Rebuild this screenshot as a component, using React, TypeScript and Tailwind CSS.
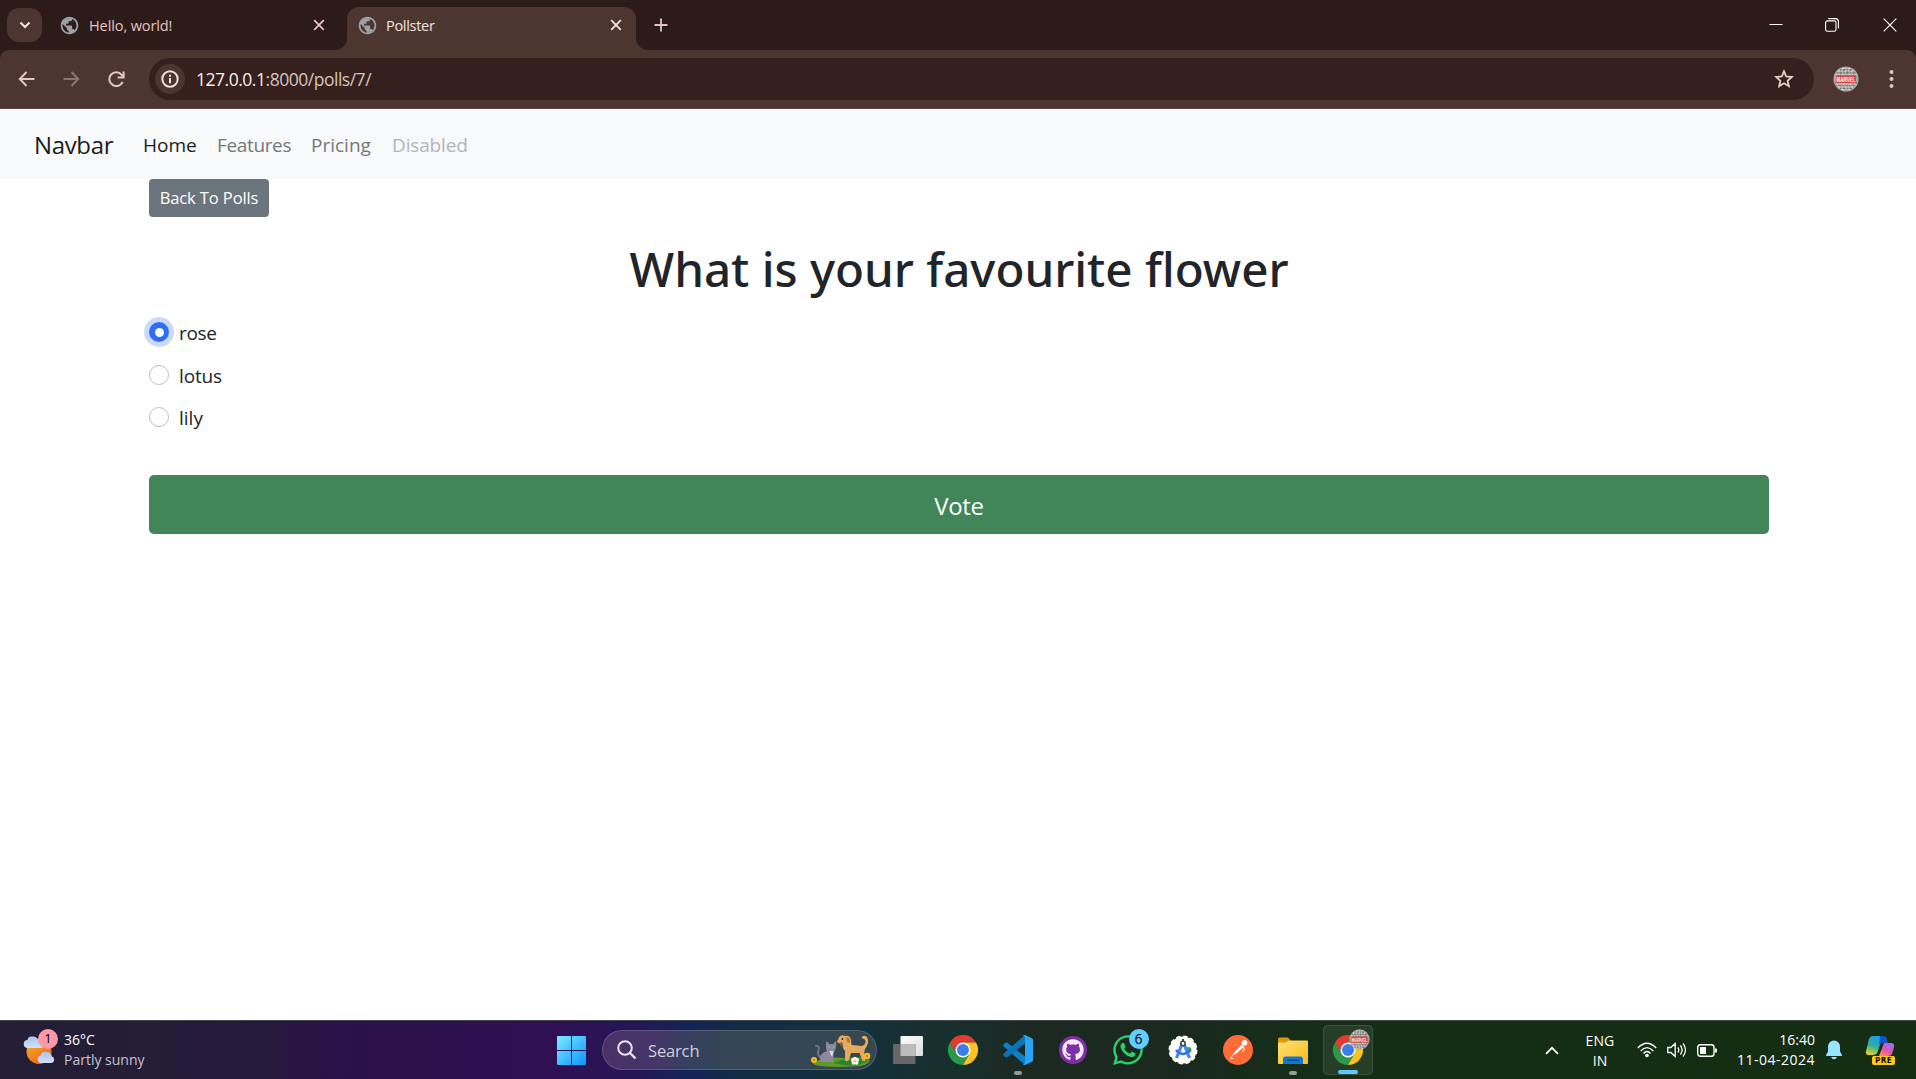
import React from 'react';
import { FaGithub, FaWhatsapp } from 'react-icons/fa';
import { MdPublic } from 'react-icons/md';

function Close({ className = '' }: { className?: string }) {
  return (
    <svg className={className} width="12" height="12" viewBox="0 0 12 12" fill="none" stroke="currentColor" strokeWidth="1.8">
      <path d="M1.2 1.2l9.6 9.6M10.8 1.2l-9.6 9.6" />
    </svg>
  );
}

function Marvel({ size }: { size: number }) {
  return (
    <svg width={size} height={size} viewBox="0 0 26 26">
      <circle cx="13" cy="13" r="12.6" fill="#a9a7a6" />
      <g fill="none" strokeWidth="1.2">
        <path stroke="#e6e4e2" strokeDasharray="2 1.5 1 2" d="M5 5h16M2.5 8.5h21M3 18h20M5 21h16M9 23.5h8M9 2.5h8" />
        <path stroke="#6d6a69" strokeDasharray="1 2 2 1.6" d="M7 3.8h12M3.6 6.8h19M3 19.5h19M7 22.5h12M2 16.7h4M20 16.7h4" />
      </g>
      <rect x="3" y="9.2" width="20" height="7.8" fill="#d8464b" />
      <g transform="translate(13 15.800) scale(0.600 1)">
        <text textAnchor="middle" fontSize="7.5" fontWeight="700" fontFamily="Liberation Sans, sans-serif" fill="#fff">MARVEL</text>
      </g>
    </svg>
  );
}

function Chrome() {
  return (
    <svg width="30" height="30" viewBox="0 0 48 48">
      <path fill="#e33b2e" d="M3.2 12A24 24 0 0 1 44.8 12L24 12V24L13.6 30Z" />
      <path fill="#2a9a4a" d="M3.2 12L13.6 30L24 24L34.4 30L24 48A24 24 0 0 1 3.2 12Z" />
      <path fill="#fcc31e" d="M44.8 12H24V24L34.4 30L24 48A24 24 0 0 0 44.8 12Z" />
      <circle cx="24" cy="24" r="12" fill="#fff" />
      <circle cx="24" cy="24" r="9.6" fill="#3b7ded" />
    </svg>
  );
}

function TabStrip() {
  return (
    <div className="flex h-[50px] items-center bg-[#2d1b19]">
      <div className="ml-[7px] flex h-[34px] w-[35px] items-center justify-center rounded-xl bg-[#4d3530]">
        <svg width="12" height="8" viewBox="0 0 12 8" fill="none" stroke="#f5e3e0" strokeWidth="2"><path d="M1.5 1.5L6 6l4.5-4.5" /></svg>
      </div>
      <div className="ml-[17px] flex w-[288px] items-center text-[#e6c3be]">
        <MdPublic className="h-[21px] w-[21px] text-[#9aa0a6]" />
        <span className="ml-[9px] pt-[2px] text-[14.5px] tracking-[-0.1px]">Hello, world!</span>
        <Close className="mr-[22px] ml-auto" />
      </div>
      <div className="relative flex h-[43px] w-[289px] items-center self-end rounded-t-[12px] bg-[#4d3530] pb-[7px] pl-[10px] text-[#f7e4e1]">
        <svg className="absolute bottom-0 -left-[12px]" width="12" height="12" viewBox="0 0 12 12"><path d="M12 0A12 12 0 0 1 0 12H12Z" fill="#4d3530" /></svg>
        <svg className="absolute -right-[12px] bottom-0" width="12" height="12" viewBox="0 0 12 12"><path d="M0 0A12 12 0 0 0 12 12H0Z" fill="#4d3530" /></svg>
        <MdPublic className="h-[21px] w-[21px] text-[#9aa0a6]" />
        <span className="ml-[8px] pt-[2px] text-[14.5px] tracking-[-0.3px]">Pollster</span>
        <Close className="mr-[14px] ml-auto" />
      </div>
      <svg className="ml-[18px]" width="14" height="14" viewBox="0 0 14 14" fill="none" stroke="#e6c3be" strokeWidth="1.8"><path d="M7 0.5v13M0.5 7h13" /></svg>
      <div className="mr-[19px] ml-auto flex items-center text-white">
        <svg width="14" height="14" viewBox="0 0 14 14" stroke="currentColor"><path d="M0.5 6.5h13" /></svg>
        <svg className="ml-[42px]" width="14" height="14" viewBox="0 0 14 14" fill="none" stroke="currentColor" strokeWidth="1.1">
          <rect x="0.6" y="2.9" width="10.4" height="10.4" rx="1.8" />
          <path d="M3.2 0.6h7.2a3 3 0 0 1 3 3v7" />
        </svg>
        <svg className="ml-[44px]" width="14" height="14" viewBox="0 0 14 14" fill="none" stroke="currentColor" strokeWidth="1.2"><path d="M0.7 0.7l12.6 12.6M13.3 0.7L0.7 13.3" /></svg>
      </div>
    </div>
  );
}

function Toolbar() {
  return (
    <div className="bg-[#2d1b19]">
      <div className="flex h-[59px] items-center rounded-t-[9px] border-b border-[#5d4742] bg-[#4d3530] text-[#e6c3be]">
        <svg className="ml-[18px]" width="17" height="16" viewBox="0 0 17 16" fill="none" stroke="currentColor" strokeWidth="2"><path d="M16.500 8H2M8.500 1L1.800 8l6.700 7" /></svg>
        <svg className="ml-[28px] text-[#8f746f]" width="17" height="16" viewBox="0 0 17 16" fill="none" stroke="currentColor" strokeWidth="2"><path d="M0.500 8H15M8.500 1l6.700 7-6.700 7" /></svg>
        <svg className="ml-[28px]" width="17" height="17" viewBox="0 0 17 17" fill="none" stroke="currentColor" strokeWidth="2.1"><path d="M14.600 10.800A6.900 6.900 0 1 1 13.600 3.800L15.300 5.700" /><path d="M15.600 0.500V6.500H9.600" /></svg>
        <div className="ml-[24px] flex h-[42px] w-[1665px] items-center rounded-full bg-[#36201d] pl-[6px]">
          <div className="flex h-[30px] w-[30px] items-center justify-center rounded-full bg-[#4d3530]">
            <svg width="18" height="18" viewBox="0 0 18 18" fill="none" stroke="#f3dedb" strokeWidth="2"><circle cx="9" cy="9" r="7.700" /><path d="M9 8v5.200M9 4.700v2" /></svg>
          </div>
          <span className="ml-[11px] pt-px text-[17.500px] tracking-[-0.480px] text-[#d8c3bf]"><span className="text-[#fbeeec]">127.0.0.1</span>:8000/polls/7/</span>
          <svg className="mr-[20px] ml-auto" width="20" height="20" viewBox="0 0 20 20" fill="none" stroke="#e6cfcb" strokeWidth="1.800" strokeLinejoin="miter"><path d="M10 2.300l2.200 5.200 5.600.5-4.200 3.700 1.250 5.500L10 14.300l-4.850 2.900 1.250-5.500L2.200 8l5.600-.5z" /></svg>
        </div>
        <div className="ml-[19px]"><Marvel size={26} /></div>
        <svg className="ml-[30px]" width="5" height="20" viewBox="0 0 5 20" fill="currentColor"><circle cx="2.500" cy="3" r="2" /><circle cx="2.500" cy="10" r="2" /><circle cx="2.500" cy="17" r="2" /></svg>
      </div>
    </div>
  );
}

function Page() {
  return (
    <main className="flex-1 bg-white text-[#212529]">
      <nav className="flex h-[70px] items-center bg-[#f8f9fb] pt-[2px] pl-[34px] text-[19px]">
        <span className="w-[109px] text-[24px] tracking-[-0.350px] text-[#1b1d1f]">Navbar</span>
        <span className="w-[74px] text-[#1b1d1f]">Home</span>
        <span className="w-[94px] tracking-[-0.350px] text-[#767778]">Features</span>
        <span className="w-[81px] text-[#767778]">Pricing</span>
        <span className="tracking-[-0.150px] text-[#b4b5b6]">Disabled</span>
      </nav>
      <div className="mx-[149px] w-[1620px]">
        <button className="flex h-[38px] w-[120px] items-center justify-center rounded-[4px] bg-[#6c757d] pt-px text-[16.500px] tracking-[-0.100px] text-white">Back To Polls</button>
        <h1 className="mt-[22px] text-center font-['Noto_Sans'] text-[47.500px] leading-[60px] font-medium">What is your favourite flower</h1>
        <div className="mt-[18px] flex flex-col text-[19px]">
          <label className="flex h-[43px] items-start">
            <span className="mt-[5px] flex h-5 w-5 items-center justify-center rounded-full bg-[#2f6df6] ring-[5px] ring-[#cad9fd]"><span className="h-[9px] w-[9px] rounded-full bg-white" /></span>
            <span className="ml-[10px] leading-[32px] tracking-[-0.300px]">rose</span>
          </label>
          <label className="flex h-[42px] items-start">
            <span className="mt-[5px] h-5 w-5 rounded-full border border-[#bfbfbf] bg-white" />
            <span className="ml-[10px] leading-[32px] tracking-[-0.150px]">lotus</span>
          </label>
          <label className="flex h-[42px] items-start">
            <span className="mt-[5px] h-5 w-5 rounded-full border border-[#bfbfbf] bg-white" />
            <span className="ml-[10px] leading-[32px]">lily</span>
          </label>
        </div>
        <button className="mt-[31px] flex h-[59px] w-full items-center justify-center rounded-[5px] bg-[#418659] pt-[2px] text-[24px] tracking-[-0.300px] text-white">Vote</button>
      </div>
    </main>
  );
}

function Pets() {
  return (
    <svg width="60" height="34" viewBox="0 0 60 34">
      <path d="M2 29Q14 22 34 24Q52 22 59 26Q58 31 48 32Q26 34 10 32Q2 31 2 29Z" fill="#5d9a22" />
      <path d="M22 29Q40 22 58 26Q52 31 38 32Z" fill="#2d8431" />
      <path d="M10 25Q5 19 8 15Q8 11 4 12" fill="none" stroke="#77738a" strokeWidth="1.800" />
      <path d="M9 27Q8 19 16 17Q14 14 15.500 7L18.500 10H22L25 7Q26 14 23.500 17Q22 19 23 28H12Q9 29 9 27Z" fill="#8b879d" />
      <path d="M18.500 17h4l-1 5q-2 0-3-5z" fill="#ded9e8" />
      <circle cx="18.300" cy="12.800" r="1" fill="#5aca63" /><circle cx="22.500" cy="12.800" r="1" fill="#5aca63" />
      <path d="M28 3Q31 0 34 2Q39 1 40 6L40.500 11L51 12Q54 11 54.500 8Q55 5 50.500 4Q52 0 56 3Q59 8 54 15L53 19L54.500 27H51.500L48.500 19L40 19L37.500 27H34L34 17Q31 14 32 10L27 9Q25 7 27.500 5Z" fill="#e3ab60" />
      <path d="M35 3Q39.500 3 39 9L36 8Z" fill="#b87330" />
      <path d="M28.500 8.500h3.500l-1 4q-2 0-2.500-4z" fill="#cf4436" />
      <circle cx="31.500" cy="5" r=".9" fill="#33221a" />
      <g fill="#f7bd24"><circle cx="3" cy="26" r="3" /><circle cx="56" cy="22" r="3.300" /></g>
      <circle cx="3" cy="26" r="1.200" fill="#dc7812" /><circle cx="56" cy="22" r="1.300" fill="#dc7812" />
      <g fill="#fff"><circle cx="42" cy="26" r="2" /><circle cx="46" cy="26" r="2" /><circle cx="42.500" cy="28.800" r="1.900" /><circle cx="45.500" cy="28.800" r="1.900" /><circle cx="44" cy="24.500" r="1.800" /></g>
      <circle cx="44" cy="27" r="1.500" fill="#f3c53c" />
    </svg>
  );
}

function Cell({ children, dot }: { children: React.ReactNode; dot?: boolean }) {
  return (
    <div className="relative flex h-[59px] w-[55px] shrink-0 items-center justify-center">
      {children}
      {dot && <span className="absolute bottom-[5px] h-1 w-2 rounded-full bg-[#959a98]" />}
    </div>
  );
}

function Taskbar() {
  return (
    <footer className="flex h-[59px] items-center border-t border-[#3f474c] bg-[linear-gradient(90deg,#241e36_0px,#261b3a_250px,#2b1248_330px,#301055_560px,#241657_640px,#14235a_685px,#122c44_740px,#14303b_860px,#18302d_950px,#1c2822_1040px,#1a291d_1180px,#142e16_1330px,#142e14_1916px)] text-[14px] text-white">
      <div className="flex w-[544px] shrink-0 items-center">
        <div className="relative ml-[23px] h-[36px] w-[36px]">
          <svg width="36" height="36" viewBox="0 0 36 36">
            <defs>
              <linearGradient id="sun" x1="0" y1="0" x2="0.600" y2="1"><stop stopColor="#f9b62d" /><stop offset="1" stopColor="#ee681b" /></linearGradient>
              <linearGradient id="cloud" x1="0" y1="0" x2="0" y2="1"><stop stopColor="#a9c4f2" /><stop offset="1" stopColor="#d2e1fa" /></linearGradient>
            </defs>
            <circle cx="16" cy="19.500" r="12.500" fill="url(#sun)" />
            <path fill="url(#cloud)" d="M5 16a4 4 0 0 1-.5-8Q5 4 9 4.500Q14 4 16 9q4 1 3 7z" />
            <path fill="url(#cloud)" d="M17 31a4 4 0 0 1 .5-7.500Q19 19 23 20q5 0 6 4.500 3 1 2 4.500-1 2-3 2z" />
          </svg>
          <span className="absolute -top-[3px] left-[15px] flex h-5 w-5 items-center justify-center rounded-full bg-[#ff99a4] text-[13px] text-black">1</span>
        </div>
        <div className="ml-[5px] leading-[20px]">
          <div>36°C</div>
          <div className="text-[#c6c3ce]">Partly sunny</div>
        </div>
      </div>
      <Cell>
        <svg width="29" height="29" viewBox="0 0 29 29">
          <defs><linearGradient id="win" gradientUnits="userSpaceOnUse" x1="0" y1="0" x2="29" y2="29"><stop stopColor="#79ecff" /><stop offset="1" stopColor="#0d94ff" /></linearGradient></defs>
          <path fill="url(#win)" d="M1 0h13v14H0V1q0-1 1-1zM15 0h13q1 0 1 1v13H15zM0 15h14v14H1q-1 0-1-1zM15 15h14v13q0 1-1 1H15z" />
        </svg>
      </Cell>
      <div className="mr-[3.500px] ml-[3px] flex h-[40px] w-[275px] shrink-0 items-center rounded-full border border-white/15 bg-[linear-gradient(90deg,#4a3068_0px,#453568_50px,#36405f_85px,#344555_120px,#354654_200px,#36484d_275px)] pl-[14px]">
        <svg width="20" height="20" viewBox="0 0 20 20" fill="none" stroke="#e9e6ee" strokeWidth="2"><circle cx="8" cy="8" r="6.800" /><path d="M13 13l5.500 5.500" strokeWidth="2.400" /></svg>
        <span className="ml-[11px] pt-[2px] text-[16.500px] tracking-[-0.150px] text-[#cfd0da]">Search</span>
        <div className="mr-[5px] ml-auto pt-[2px]"><Pets /></div>
      </div>
      <Cell>
        <svg width="30" height="28" viewBox="0 0 30 28">
          <defs><linearGradient id="tv" x1="0" y1="0" x2="1" y2="1"><stop stopColor="#fff" /><stop offset="1" stopColor="#dcdcdc" /></linearGradient></defs>
          <rect x="7.500" y="0" width="22.500" height="20" rx="1" fill="url(#tv)" />
          <rect x="0" y="8" width="22.500" height="20" rx="1" fill="#666" />
          <rect x="7.500" y="8" width="15" height="12" fill="#bcbcbc" />
        </svg>
      </Cell>
      <Cell><Chrome /></Cell>
      <Cell dot>
        <svg width="30" height="30" viewBox="0 0 30 30">
          <path fill="#0f7fc6" d="M22 30V21.500L4.300 7.800Q3.500 7 2.600 7.700L.5 9.500Q-.3 10.500.5 11.300Z" />
          <path fill="#0b74b8" d="M22 0V8.500L4.300 22.200Q3.500 23 2.600 22.300L.5 20.500Q-.3 19.500.5 18.700Z" />
          <path fill="#29a6f3" d="M22 0L29 3.200Q30 3.700 30 4.800V25.200Q30 26.300 29 26.800L22 30Q20.500 30 19.500 29Q22 29.500 22 27.500V2.500Q22 .5 19.500 1Q20.500 0 22 0Z" />
        </svg>
      </Cell>
      <Cell>
        <span className="flex h-[28px] w-[28px] items-center justify-center rounded-full bg-[#7d30a6]"><FaGithub className="h-[22px] w-[22px] text-[#f3eaf6]" /></span>
      </Cell>
      <Cell>
        <FaWhatsapp className="h-[34px] w-[34px] text-[#25d366]" />
        <span className="absolute top-[8px] left-[28px] flex h-5 w-5 items-center justify-center rounded-full bg-[#60cdff] text-[14px] text-black">6</span>
      </Cell>
      <Cell>
        <svg width="30" height="30" viewBox="0 0 30 30">
          <circle cx="15" cy="15" r="13.600" fill="#fff" stroke="#fff" strokeWidth="1.800" strokeDasharray="4.300 2.800" />
          <circle cx="20.500" cy="15" r="3" fill="#36a852" />
          <path d="M14 9L8.500 23M16 9l5.500 14" stroke="#4285f4" strokeWidth="3.200" fill="none" />
          <path d="M8 15q7 8 14 0" stroke="#3572e8" strokeWidth="2.600" fill="none" />
          <circle cx="15" cy="8.500" r="2.200" fill="#fff" stroke="#37474f" strokeWidth="1.600" /><path d="M15 4v3" stroke="#37474f" strokeWidth="2" />
        </svg>
      </Cell>
      <Cell>
        <svg width="30" height="30" viewBox="0 0 30 30">
          <circle cx="15" cy="15" r="15" fill="#ff6c37" />
          <circle cx="21.500" cy="7.800" r="2.800" fill="#fff" />
          <path d="M19 9.500L12 16.500 13.500 18.500 20.500 12zM12 17l-5 6 6.500-5z" fill="#fff" />
          <path d="M20 11.500q2.500 3-1 5M7 23.500l3 0" fill="none" stroke="#fff" strokeWidth="1.200" />
        </svg>
      </Cell>
      <Cell dot>
        <svg width="30" height="27" viewBox="0 0 30 27">
          <defs><linearGradient id="fold" x1="0" y1="0" x2="1" y2="1"><stop stopColor="#ffe17b" /><stop offset="1" stopColor="#fbbc10" /></linearGradient></defs>
          <path d="M0 2q0-1.500 1.500-1.500h7.500q1 0 2 1l2 3V12H0z" fill="#dd9a00" />
          <path d="M0 6.500q0-1 1-1h6.500l3.500-2H29q1 0 1 1V26q0 1-1 1H1q-1 0-1-1z" fill="url(#fold)" />
          <path d="M5 27v-5q0-2.500 2.500-2.500h15Q25 19.500 25 22v5z" fill="#1277cf" />
          <path d="M9 23.300h12" stroke="#0a4d90" strokeWidth="1.400" />
        </svg>
      </Cell>
      <Cell>
        <div className="relative flex h-[50px] w-[50px] items-center justify-center rounded-[5px] border border-white/10 bg-white/8">
          <Chrome />
          <div className="absolute top-[3px] left-[25px] opacity-95"><Marvel size={21} /></div>
          <span className="absolute bottom-0 h-1 w-5 rounded-full bg-[#60c8f8]" />
        </div>
      </Cell>
      <div className="mr-[21px] ml-auto flex items-center">
        <svg width="14" height="9" viewBox="0 0 14 9" fill="none" stroke="#fff" strokeWidth="1.800"><path d="M1 7.800L7 1.800l6 6" /></svg>
        <div className="ml-[26px] w-[30px] pt-px text-center leading-[20px] tracking-[0.100px]"><div>ENG</div><div>IN</div></div>
        <svg className="ml-[22px]" width="20" height="16" viewBox="0 0 20 16" fill="none" stroke="#fff" strokeWidth="1.400">
          <path d="M.8 6Q10-3.500 19.200 6M3.700 9Q10 2.300 16.300 9M6.500 11.500Q10 7.500 13.500 11.500" />
          <circle cx="10" cy="13.500" r="1.800" fill="#fff" stroke="none" />
        </svg>
        <svg className="ml-[10px]" width="20" height="16" viewBox="0 0 20 16" fill="none" stroke="#fff" strokeWidth="1.300">
          <path d="M.8 5.500h3L8.200 1.500v13L3.800 10.500h-3zM10.800 5.500q2 2.500 0 5M13.400 3.500q3.400 4.500 0 9M16 1.500q5 6.500 0 13" />
        </svg>
        <svg className="ml-[10px]" width="20" height="13" viewBox="0 0 20 13" fill="none">
          <rect x=".7" y=".7" width="16.300" height="11.600" rx="2.500" stroke="#fff" strokeWidth="1.400" />
          <rect x="3" y="3" width="6" height="7" rx="0.500" fill="#fff" /><path d="M18 4.500h1q1 0 1 1v2q0 1-1 1h-1z" fill="#fff" />
        </svg>
        <div className="ml-[18px] w-[80px] text-right leading-[20px]"><div>16:40</div><div className="tracking-[0.500px]">11-04-2024</div></div>
        <svg className="ml-[11px]" width="16" height="20" viewBox="0 0 16 20" fill="#98e4fd">
          <path d="M8 .5a6 6 0 0 1 6 6v5l2 3.500q.2 1-.8 1H.8q-1 0-.8-1l2-3.500v-5a6 6 0 0 1 6-6z" /><path d="M5.200 17h5.600q-.6 2.300-2.800 2.300T5.200 17z" />
        </svg>
        <div className="relative ml-[23px] h-[30px] w-[30px]">
          <svg width="30" height="30" viewBox="0 0 30 30">
            <defs>
              <linearGradient id="cpa" x1="0.500" y1="0" x2="0.200" y2="1"><stop stopColor="#1b9df0" /><stop offset=".5" stopColor="#2fae9c" /><stop offset="1" stopColor="#f0d21c" /></linearGradient>
              <linearGradient id="cpb" x1="0.800" y1="0" x2="0.200" y2="1"><stop stopColor="#9a6cf5" /><stop offset=".6" stopColor="#e356ac" /><stop offset="1" stopColor="#ff8f5c" /></linearGradient>
            </defs>
            <path fill="url(#cpa)" d="M8 1h10l-5 15q-1 4-5 4H3q-3-1-2-4L4 4q1-3 4-3z" />
            <path fill="#1553cf" d="M15 1h3q3 0 4 3l1 4h-5q-3 0-4 3z" />
            <path fill="url(#cpb)" d="M19 8h8q3 1 2 4l-2 7q-1 2-4 2h-9z" />
          </svg>
          <span className="absolute bottom-0 left-[7px] flex h-[9px] w-[23px] items-center justify-center rounded-[2px] bg-[#ffc915] text-[8.500px] font-bold tracking-[0.500px] text-black">PRE</span>
        </div>
      </div>
    </footer>
  );
}

export default function App() {
  return (
    <div className="flex h-[1079px] w-[1916px] flex-col overflow-hidden font-['Open_Sans','Noto_Sans',sans-serif]">
      <TabStrip />
      <Toolbar />
      <Page />
      <Taskbar />
    </div>
  );
}
